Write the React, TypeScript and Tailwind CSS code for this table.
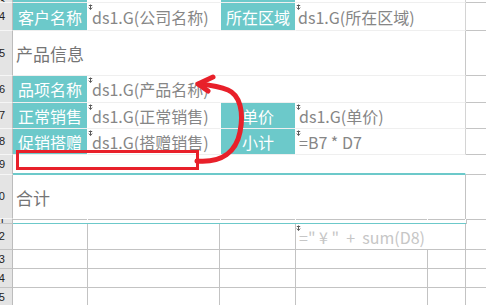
import React from 'react';

// report grid: row header | A | B | C | D | spill column
const TEAL = 'bg-[#6cc9ca]';

const Mark = () => (
  <svg className="absolute left-0 top-[1px]" width="5" height="6" viewBox="0 0 5 6">
    <path d="M2.5 0.5v5M0.8 3.6l1.7 1.8 1.7-1.8M0.8 1.5h3.4" stroke="#5a5a5a" strokeWidth="1" fill="none" />
  </svg>
);

const Head = ({ n, dark }: { n: string; dark?: boolean }) => (
  <div
    className={`flex w-[13px] shrink-0 items-center justify-end overflow-hidden border-r border-b border-r-[#bcbcbc] bg-[#e4e4e4] pr-[7px] font-['Liberation_Sans',sans-serif] text-[11px] leading-none text-[#222] ${
      dark ? 'border-b-[#c3c3c3]' : 'border-b-[#f6f6f6]'
    }`}
  >
    {n}
  </div>
);

const Label = ({ w, text }: { w: string; text?: string }) => (
  <div
    className={`flex shrink-0 items-center justify-center border-r border-b border-r-white border-b-[#efefef] ${TEAL} text-[16px] leading-none whitespace-nowrap text-white ${w}`}
  >
    {text}
  </div>
);

const Value = ({ w, text, pad, last }: { w: string; text?: string; pad: string; last?: boolean }) => (
  <div
    className={`relative flex shrink-0 items-center overflow-hidden border-r border-b border-b-[#efefef] text-[16px] leading-none whitespace-nowrap text-[#868686] ${
      last ? 'border-r-[#d4d4d4]' : 'border-r-white'
    } ${pad} ${w}`}
  >
    {text && <Mark />}
    {text}
  </div>
);

const Edge = () => <div className="flex-1 border-b border-b-[#c4c4c4]" />;

const Grid = ({ w, children }: { w: string; children?: React.ReactNode }) => (
  <div className={`relative flex shrink-0 items-center border-r border-b border-[#c3c3c3] ${w}`}>{children}</div>
);

export default function App() {
  return (
    <div className="relative h-[305px] w-[486px] overflow-hidden bg-white font-['Noto_Sans_CJK_SC','Open_Sans',sans-serif]">
      <div className="flex h-[3px]">
        <Head n="3" />
        <Label w="w-[75px]" />
        <Value w="w-[133px]" pad="" />
        <Label w="w-[75px]" />
        <Value w="w-[170px]" pad="" last />
        <Edge />
      </div>

      <div className="flex h-[28px]">
        <Head n="4" />
        <Label w="w-[75px]" text="客户名称" />
        <Value w="w-[133px]" pad="pl-[4px]" text="ds1.G(公司名称)" />
        <Label w="w-[75px]" text="所在区域" />
        <Value w="w-[170px]" pad="pl-[2px]" text="ds1.G(所在区域)" last />
        <Edge />
      </div>

      <div className="flex h-[45px]">
        <Head n="5" />
        <div className="flex w-[453px] shrink-0 items-center border-r border-b border-r-[#c8c8c8] border-b-[#efefef] pl-[3px] text-[17px] leading-none text-[#757575]">
          产品信息
        </div>
        <Edge />
      </div>

      <div className="flex h-[27px]">
        <Head n="6" />
        <Label w="w-[75px]" text="品项名称" />
        <Value w="w-[133px]" pad="pl-[4px]" text="ds1.G(产品名称)" />
        <Value w="w-[75px]" pad="" />
        <Value w="w-[170px]" pad="" last />
        <Edge />
      </div>

      <div className="flex h-[26px]">
        <Head n="7" />
        <Label w="w-[75px]" text="正常销售" />
        <Value w="w-[133px]" pad="pl-[4px]" text="ds1.G(正常销售)" />
        <Label w="w-[75px]" text="单价" />
        <Value w="w-[170px]" pad="pl-[3px]" text="ds1.G(单价)" last />
        <Edge />
      </div>

      <div className="flex h-[26px]">
        <Head n="8" />
        <Label w="w-[75px]" text="促销搭赠" />
        <Value w="w-[133px]" pad="pl-[4px]" text="ds1.G(搭赠销售)" />
        <Label w="w-[75px]" text="小计" />
        <Value w="w-[170px]" pad="pl-[3px]" text="=B7 * D7" last />
        <Edge />
      </div>

      <div className="flex h-[20px]">
        <Head n="9" />
        <div className="w-[453px] shrink-0 border-r border-b-2 border-r-white border-b-[#6cc9ca]" />
        <Edge />
      </div>

      <div className="flex h-[44px]">
        <Head n="10" />
        <div className="flex w-[453px] shrink-0 items-center border-r border-r-[#c3c3c3] pl-[3px] text-[17px] leading-none text-[#757575]">
          合计
        </div>
        <div className="flex-1" />
      </div>

      <div className="flex h-[5px]">
        <Head n="11" dark />
        {['w-[75px]', 'w-[133px]', 'w-[75px]', 'w-[132px]', 'w-[38px]'].map((w) => (
          <div key={w} className={`flex shrink-0 flex-col border-b border-b-[#6cc9ca] ${w}`}>
            <div className="mr-px h-px bg-[#c3c3c3]" />
          </div>
        ))}
        <div className="flex-1 border-t border-l border-[#c3c3c3]" />
      </div>

      <div className="flex h-[26px]">
        <Head n="12" dark />
        <Grid w="w-[75px]" />
        <Grid w="w-[132px]" />
        <Grid w="w-[76px]" />
        <Grid w="w-[170px]">
          <Mark />
          <span className="pl-[3px] text-[16px] leading-none whitespace-pre text-[#c6c6c6]">=" ¥ "  +  sum(D8)</span>
        </Grid>
        <Edge />
      </div>

      {['13', '14', '15'].map((n) => (
        <div key={n} className="flex h-[19px]">
          <Head n={n} dark />
          <Grid w="w-[75px]" />
          <Grid w="w-[132px]" />
          <Grid w="w-[76px]" />
          <Grid w="w-[132px]" />
          <Grid w="w-[38px]" />
          <Edge />
        </div>
      ))}

      {/* hand-drawn red callout */}
      <svg className="pointer-events-none absolute inset-0" width="486" height="305" viewBox="0 0 486 305">
        <rect x="17.5" y="151.5" width="180" height="17" fill="none" stroke="#e8202a" strokeWidth="3" />
        <path
          d="M197 161C222 163 236 152 240 132C244 112 240 95 228 90C218 86 208 85 199 84"
          fill="none"
          stroke="#e8202a"
          strokeWidth="5"
          strokeLinecap="round"
        />
        <path
          d="M213 77L198 84L208 91"
          fill="none"
          stroke="#e8202a"
          strokeWidth="5"
          strokeLinecap="round"
          strokeLinejoin="round"
        />
      </svg>
    </div>
  );
}
